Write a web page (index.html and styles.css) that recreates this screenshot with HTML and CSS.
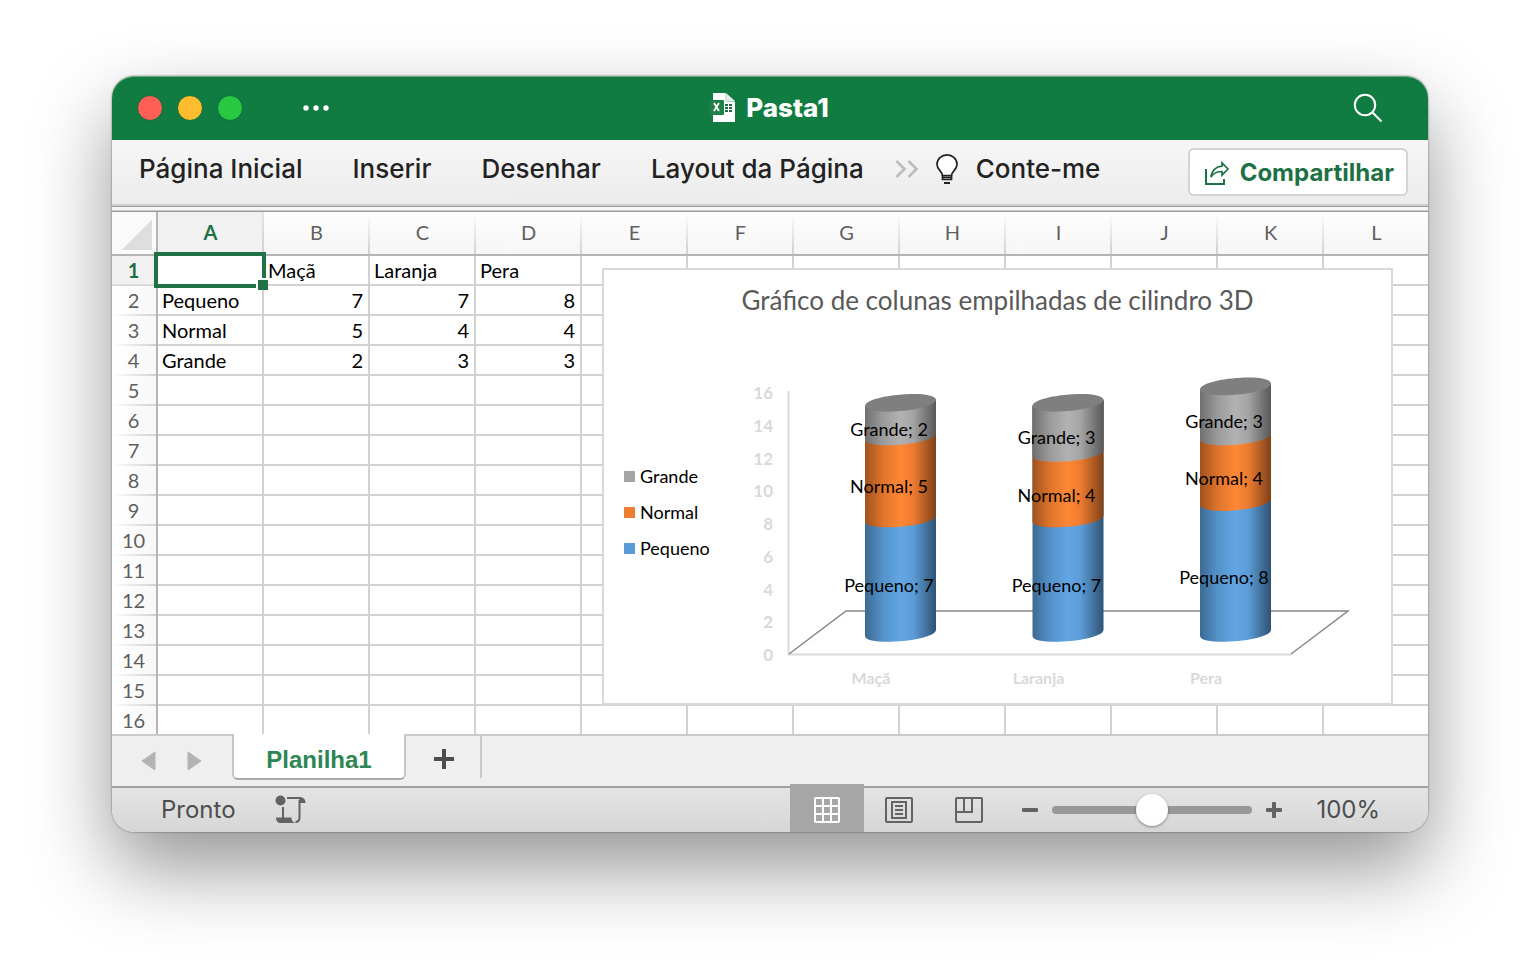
FILE: index.html
```html
<!DOCTYPE html>
<html lang="pt-BR">
<head>
    <meta charset="UTF-8">
    <title>Pasta1</title>
    <link rel="stylesheet" href="styles.css">
</head>
<body>
<div class="window">
    <header class="titlebar">
        <div class="titlebar-left">
            <button class="light light-close" aria-label="Fechar"></button>
            <button class="light light-min" aria-label="Minimizar"></button>
            <button class="light light-max" aria-label="Ampliar"></button>
            <button class="more" aria-label="Mais">
                <svg width="26" height="6" viewBox="0 0 26 6" fill="#fff"><circle cx="3" cy="3" r="2.700"/><circle cx="13" cy="3" r="2.700"/><circle cx="23" cy="3" r="2.700"/></svg>
            </button>
        </div>
        <h1 class="title">
            <svg width="26" height="30" viewBox="0 0 26 30">
                <path d="M4 0h12l10 9v20H4z" fill="#fff"/>
                <path d="M17 0v8h9z" fill="#e4efe8"/>
                <path d="M17 1v7.500h8" stroke="#b5d1c0" fill="none"/>
                <path d="M16 11h3v2h-3zM20 11h3v2h-3zM16 14h3v2h-3zM20 14h3v2h-3zM16 17h3v2h-3zM20 17h3v2h-3z" fill="#1c6e42"/>
                <rect x="0" y="7" width="15" height="15" rx="1" fill="#1f8049"/>
                <path d="M5 10l5 8M10 10l-5 8" stroke="#fff" stroke-width="1.800"/>
            </svg>
            <span>Pasta1</span>
        </h1>
        <button class="search" aria-label="Buscar">
            <svg width="30" height="30" viewBox="0 0 30 30" fill="none" stroke="#fff" stroke-width="2"><circle cx="12" cy="12" r="10.200"/><path d="M19.300 19.300L28.500 28.500"/></svg>
        </button>
    </header>

    <nav class="ribbon">
        <div class="ribbon-tabs">
            <button>Página Inicial</button>
            <button>Inserir</button>
            <button>Desenhar</button>
            <button>Layout da Página</button>
        </div>
        <button class="overflow" aria-label="Mais guias">
            <svg width="24" height="18" viewBox="0 0 24 18" fill="none" stroke="#bdbdbd" stroke-width="2.700"><path d="M1.500 1l8 8-8 8M13.500 1l8 8-8 8"/></svg>
        </button>
        <button class="tell-me">
            <svg width="22" height="30" viewBox="0 0 22 30" fill="none" stroke="#222" stroke-width="1.700">
                <path d="M6.500 21.500c0-4-5.500-5.500-5.500-11a10 9.600 0 0 1 20 0c0 5.500-5.500 7-5.500 11z" fill="#fff"/>
                <path d="M6.500 21v4.500h9V21M6.500 23.300h9"/><path d="M8 29h6" stroke-width="2"/>
            </svg>
            <span>Conte-me</span>
        </button>
        <button class="share">
            <svg width="25" height="24" viewBox="0 0 25 24" fill="none" stroke="#1e7145" stroke-width="2">
                <path d="M1 8v15h18v-5"/>
                <path d="M17 1.800l6 6.200-6 6.200v-3.700c-5 0-8.500 1.500-11 5.500.5-6.500 5-10.500 11-10.800z" stroke-width="1.700"/>
            </svg>
            <span>Compartilhar</span>
        </button>
    </nav>
    <div class="divider"></div>

    <main class="sheet">
        <table class="grid">
            <thead>
                <tr id="letters"><th class="corner"></th></tr>
            </thead>
            <tbody id="rows"></tbody>
        </table>

        <figure class="chart">
            <figcaption>Gráfico de colunas empilhadas de cilindro 3D</figcaption>
            <div class="chart-body">
                <ul class="legend">
                    <li class="grande">Grande</li>
                    <li class="normal">Normal</li>
                    <li class="pequeno">Pequeno</li>
                </ul>
                <svg class="plot" width="651" height="363" viewBox="0 0 651 363">
                    <defs>
                        <linearGradient id="blue">
                            <stop offset="0" stop-color="#3c6a92"/><stop offset=".25" stop-color="#5492cb"/><stop offset=".5" stop-color="#62a6e4"/><stop offset=".68" stop-color="#5c9cd7"/><stop offset="1" stop-color="#2f5373"/>
                        </linearGradient>
                        <linearGradient id="orange">
                            <stop offset="0" stop-color="#a0521d"/><stop offset=".25" stop-color="#df742c"/><stop offset=".5" stop-color="#ff8836"/><stop offset=".68" stop-color="#ec7b30"/><stop offset="1" stop-color="#7e4118"/>
                        </linearGradient>
                        <linearGradient id="grey">
                            <stop offset="0" stop-color="#6f6f6f"/><stop offset=".25" stop-color="#9b9b9b"/><stop offset=".5" stop-color="#b2b2b2"/><stop offset=".68" stop-color="#a4a4a4"/><stop offset="1" stop-color="#585858"/>
                        </linearGradient>
                    </defs>
                    <!-- piso -->
                    <path d="M48.500 51V314.500H551" fill="none" stroke="#d9d9d9" stroke-width="2"/>
                    <path d="M49 314L106 271H608L551 314" fill="none" stroke="#868686" stroke-width="1.500"/>
                    <g class="axis-y" id="ticks"></g>
                    <g id="cylinders"></g>
                </svg>
            </div>
        </figure>
    </main>

    <div class="tabs">
        <button class="arrow" aria-label="Planilha anterior"><svg width="15" height="20" viewBox="0 0 15 20"><path d="M14 1v18L1 10z" fill="#b3b3b3" stroke="#b3b3b3" stroke-linejoin="round"/></svg></button>
        <button class="arrow" aria-label="Próxima planilha"><svg width="15" height="20" viewBox="0 0 15 20"><path d="M1 1v18l13-9z" fill="#b3b3b3" stroke="#b3b3b3" stroke-linejoin="round"/></svg></button>
        <button class="tab">Planilha1</button>
        <button class="add" aria-label="Nova planilha"><svg width="20" height="20" viewBox="0 0 20 20"><path d="M10 0v20M0 10h20" stroke="#4d4d4d" stroke-width="4"/></svg></button>
    </div>

    <footer class="status">
        <span class="ready">Pronto</span>
        <button class="macro" aria-label="Gravar macro">
            <svg width="31" height="29" viewBox="0 0 31 29" fill="none" stroke="#636363" stroke-width="2">
                <circle cx="5.500" cy="5.500" r="5" fill="#636363" stroke="none"/>
                <path d="M12 3h14M8 12v11"/>
                <path d="M24 2c4 0 6.500 2 6.500 6h-6z" fill="#636363" stroke="none"/>
                <path d="M24.500 5v17c0 3.500-1.500 5-4 5"/>
                <path d="M1 22.500h15.500c0 3 1 4.500 4 5.500H6c-3.500 0-5-2-5-5.500z" fill="#636363" stroke="none"/>
            </svg>
        </button>
        <div class="views">
            <button class="view active" aria-label="Normal">
                <svg width="26" height="26" viewBox="0 0 26 26" fill="none" stroke="#fff" stroke-width="2"><rect x="1" y="1" width="24" height="24" rx="1"/><path d="M9 1v24M17 1v24M1 9h24M1 17h24"/></svg>
            </button>
            <button class="view" aria-label="Layout da página">
                <svg width="28" height="26" viewBox="0 0 28 26" fill="none" stroke="#636363" stroke-width="2"><rect x="1" y="1" width="26" height="24" rx="1"/><rect x="7" y="5" width="14" height="16"/><path d="M10 9h8M10 13h8M10 17h8"/></svg>
            </button>
            <button class="view" aria-label="Quebra de página">
                <svg width="28" height="26" viewBox="0 0 28 26" fill="none" stroke="#636363" stroke-width="2"><rect x="1" y="1" width="26" height="24" rx="1"/><path d="M1 15h16V1M9 1v14"/></svg>
            </button>
        </div>
        <div class="zoom">
            <button aria-label="Diminuir zoom"><svg width="16" height="16" viewBox="0 0 16 16"><rect y="6" width="16" height="4" rx="1" fill="#636363"/></svg></button>
            <input type="range" min="0" max="200" value="100" aria-label="Zoom">
            <button aria-label="Aumentar zoom"><svg width="16" height="16" viewBox="0 0 16 16" fill="#636363"><rect y="6" width="16" height="4" rx="1"/><rect x="6" width="4" height="16" rx="1"/></svg></button>
        </div>
        <output class="percent">100%</output>
    </footer>
</div>

<script>
    var letters = "ABCDEFGHIJKL".split("");
    var data = [
        ["", "Maçã", "Laranja", "Pera"],
        ["Pequeno", 7, 7, 8],
        ["Normal", 5, 4, 4],
        ["Grande", 2, 3, 3]
    ];

    // cabeçalho das colunas
    letters.forEach(function (letter, i) {
        var th = document.createElement("th");
        th.className = i === 0 ? "col selected" : "col";
        th.textContent = letter;
        document.getElementById("letters").appendChild(th);
    });

    // linhas
    for (var r = 0; r < 16; r++) {
        var tr = document.createElement("tr");
        var head = document.createElement("th");
        head.className = r === 0 ? "row selected" : "row";
        head.textContent = r + 1;
        tr.appendChild(head);
        for (var c = 0; c < letters.length; c++) {
            var td = document.createElement("td");
            var value = data[r] && data[r][c];
            if (value) td.textContent = value;
            if (typeof value === "number") td.className = "number";
            if (r === 0 && c === 0) td.className = "active-cell";
            tr.appendChild(td);
        }
        document.getElementById("rows").appendChild(tr);
    }

    // eixo vertical
    var unit = 16.37;
    var ticks = "";
    for (var v = 0; v <= 16; v += 2) {
        ticks += '<text x="33" y="' + Math.round(321 - v * unit) + '">' + v + '</text>';
    }
    document.getElementById("ticks").innerHTML = ticks;

    // cilindros: as séries são empilhadas de baixo para cima
    var fills = ["url(#blue)", "url(#orange)", "url(#grey)"];
    var html = "";
    for (c = 1; c <= 3; c++) {
        var x = 125 + (c - 1) * 167.5;
        var total = data[1][c] + data[2][c] + data[3][c];
        var lid = 295 - total * unit;
        var base = 296;
        var labels = "";
        for (r = 1; r <= 3; r++) {
            html += '<path transform="translate(' + x + ' 0)" fill="' + fills[r - 1] + '" d="M0 ' + lid +
                'V' + base + 'C1 ' + (base + 11) + ' 70 ' + (base + 5) + ' 71 ' + (base - 6) + 'V' + (lid - 6) + 'z"/>';
            var next = base - data[r][c] * unit;
            labels += '<text x="' + (x + 24) + '" y="' + Math.round((base + next) / 2 + 13) + '">' + data[r][0] + '; ' + data[r][c] + '</text>';
            base = next;
        }
        html += '<path transform="translate(' + x + ' ' + lid + ')" fill="#7f7f7f" d="M0 0C1 11 70 5 71-6C70-17 1-11 0 0z"/>';
        html += '<g class="labels">' + labels + '</g>';
        html += '<text class="category" x="' + (x + 6) + '" y="344">' + data[0][c] + '</text>';
    }
    document.getElementById("cylinders").innerHTML = html;
</script>
</body>
</html>
```
FILE: styles.css
```css
* {
    margin: 0;
    padding: 0;
    box-sizing: border-box;
}
body {
    min-height: 100vh;
    padding: 76px 112px;
    background: #fff;
    font-family: Inter, "Liberation Sans", sans-serif;
    color: #222;
}
button {
    border: 0;
    background: none;
    font: inherit;
    color: inherit;
}
svg {
    display: block;
}
.window {
    border-radius: 22px;
    box-shadow: 0 0 2px rgba(0, 0, 0, .6), 0 36px 80px rgba(0, 0, 0, .42);
}

/* barra de título */
.titlebar {
    display: grid;
    grid-template-columns: 1fr auto 1fr;
    align-items: center;
    height: 64px;
    padding: 0 45px 1px 25px;
    border-top: 1px solid #6ea886;
    border-radius: 22px 22px 0 0;
    background: #117c41;
}
.titlebar-left {
    display: flex;
    align-items: center;
    gap: 14px;
}
.light {
    width: 26px;
    height: 26px;
    border: 1px solid #0e6b38;
    border-radius: 50%;
}
.light-close { background: #ff5f57; }
.light-min { background: #febc2e; }
.light-max { background: #28c840; }
.more {
    margin-left: 46px;
}
.title {
    display: flex;
    align-items: center;
    gap: 11px;
    padding-left: 18px;
    font-size: 26px;
    font-weight: 800;
    line-height: 32px;
    color: #fff;
}
.search {
    justify-self: end;
}

/* faixa de opções */
.ribbon {
    display: flex;
    align-items: center;
    height: 64px;
    padding: 0 20px 6px 27px;
    background: linear-gradient(#f6f6f6, #ececec);
    font-size: 26px;
    font-weight: 500;
    line-height: 32px;
    white-space: nowrap;
}
.ribbon-tabs {
    display: flex;
    gap: 50px;
}
.overflow {
    margin: 0 17px 0 31px;
}
.tell-me {
    display: flex;
    align-items: center;
    gap: 18px;
}
.share {
    display: flex;
    align-items: center;
    gap: 10px;
    height: 48px;
    margin: 6px 0 0 auto;
    padding: 2px 12px 0 15px;
    border: 2px solid #d4d4d4;
    border-radius: 6px;
    background: #fff;
    font-size: 24px;
    font-weight: 700;
    color: #1e7145;
}
.divider {
    height: 8px;
    border-top: 2px solid #cfcfcf;
    border-bottom: 1px solid #9b9b9b;
    background: linear-gradient(#9b9b9b 1px, #f6f6f6 1px, #f6f6f6 4px, #c9c9c9 4px);
}

/* planilha */
.sheet {
    position: relative;
    overflow: hidden;
    background: #fff;
    font-family: Lato, "Liberation Sans", sans-serif;
    color: #000;
}
.grid {
    width: 1318px;
    table-layout: fixed;
    border-collapse: separate;
    border-spacing: 0;
    font-size: 20px;
    line-height: 28px;
}
.grid th {
    padding: 0 1px 2px 0;
    font-weight: 400;
    color: #5f5f5f;
}
.grid .corner {
    width: 46px;
    height: 44px;
    border-right: 2px solid #b5b5b5;
    border-bottom: 2px solid #b5b5b5;
    background: linear-gradient(135deg, transparent 50%, #dedede 50%) 10px 8px / 30px 30px no-repeat, #fafafa;
}
.grid .col {
    width: 106px;
    border-bottom: 2px solid #b5b5b5;
    background: linear-gradient(#fff, #d0d0d0) right / 2px 100% no-repeat, linear-gradient(#fdfdfd, #f6f6f6);
}
.grid .row {
    height: 30px;
    border-right: 2px solid #b5b5b5;
    background: linear-gradient(to right, #fff, #d0d0d0) bottom / 100% 2px no-repeat, linear-gradient(to right, #fff, #f8f8f8);
}
.grid .selected {
    background-color: #f1f1f1;
    background-image: linear-gradient(#e4e4e4, #d0d0d0);
    font-weight: 700;
    color: #1e7145;
}
.grid td {
    padding: 0 5px 0 4px;
    border-right: 2px solid #d2d2d2;
    border-bottom: 2px solid #d2d2d2;
    white-space: nowrap;
}
.grid .number {
    text-align: right;
}
.grid .active-cell {
    position: relative;
}
.active-cell::before {
    content: "";
    position: absolute;
    inset: -4px;
    border: 4px solid #217346;
}
.active-cell::after {
    content: "";
    position: absolute;
    right: -6px;
    bottom: -6px;
    width: 10px;
    height: 10px;
    background: #217346;
    box-shadow: -1px -1px 0 1px #fff;
}

/* gráfico */
.chart {
    position: absolute;
    left: 490px;
    top: 56px;
    border: 2px solid #d9d9d9;
    background: #fff;
}
.chart figcaption {
    height: 70px;
    padding-top: 14px;
    font-size: 26px;
    line-height: 32px;
    text-align: center;
    color: #595959;
}
.chart-body {
    display: flex;
}
.legend {
    display: flex;
    flex-direction: column;
    gap: 12px;
    width: 136px;
    padding: 124px 0 0 20px;
    list-style: none;
    font-size: 18px;
    line-height: 24px;
}
.legend li {
    display: flex;
    align-items: center;
    gap: 5px;
}
.legend li::before {
    content: "";
    width: 11px;
    height: 11px;
}
.legend .grande::before { background: #a5a5a5; }
.legend .normal::before { background: #ed7d31; }
.legend .pequeno::before { background: #5b9bd5; }
.axis-y {
    font-size: 17px;
    font-weight: 700;
    text-anchor: end;
    fill: #d9d9d9;
}
.labels {
    font-size: 18px;
    text-anchor: middle;
}
.category {
    font-size: 16px;
    font-weight: 700;
    text-anchor: middle;
    fill: #d9d9d9;
}

/* guias das planilhas */
.tabs {
    position: relative;
    display: flex;
    height: 52px;
    margin-top: -2px;
    padding-left: 22px;
    border-top: 2px solid #cacaca;
    background: #efefef;
}
.arrow {
    width: 30px;
    margin-right: 16px;
    padding-left: 7px;
}
.tab {
    width: 174px;
    height: 46px;
    margin: -2px 0 0 6px;
    padding-top: 8px;
    border: 2px solid #c6c6c6;
    border-top: 0;
    border-bottom-color: #a9a9a9;
    border-radius: 0 0 6px 6px;
    background: #fff;
    font: bold 24px/28px "Liberation Sans", sans-serif;
    color: #2d8653;
}
.add {
    display: flex;
    align-items: center;
    justify-content: center;
    width: 76px;
    height: 42px;
    padding: 4px 0 0 2px;
    border-right: 2px solid #cacaca;
}

/* barra de status */
.status {
    display: flex;
    align-items: center;
    height: 46px;
    padding: 0 48px 1px 49px;
    border-top: 2px solid #a0a0a0;
    border-radius: 0 0 22px 22px;
    background: linear-gradient(#e4e4e4, #d6d6d6);
    font-size: 24px;
    line-height: 32px;
    color: #4d4d4d;
}
.macro {
    margin-left: 39px;
}
.views {
    display: flex;
    align-self: stretch;
    margin-left: auto;
}
.view {
    display: flex;
    align-items: center;
    justify-content: center;
    width: 70px;
}
.view.active {
    position: relative;
    width: 74px;
    margin: -4px 0 -1px;
    padding-top: 3px;
    background: #a6a6a6;
}
.zoom {
    display: flex;
    align-items: center;
    gap: 14px;
    margin-left: 18px;
}
.zoom input {
    width: 200px;
    height: 32px;
    appearance: none;
    background: none;
}
.zoom input::-webkit-slider-runnable-track {
    height: 8px;
    border-radius: 4px;
    background: #989898;
}
.zoom input::-webkit-slider-thumb {
    appearance: none;
    width: 32px;
    height: 32px;
    margin-top: -12px;
    border-radius: 50%;
    background: #fff;
    box-shadow: 0 1px 3px rgba(0, 0, 0, .4);
}
.percent {
    margin-left: 34px;
}
```
